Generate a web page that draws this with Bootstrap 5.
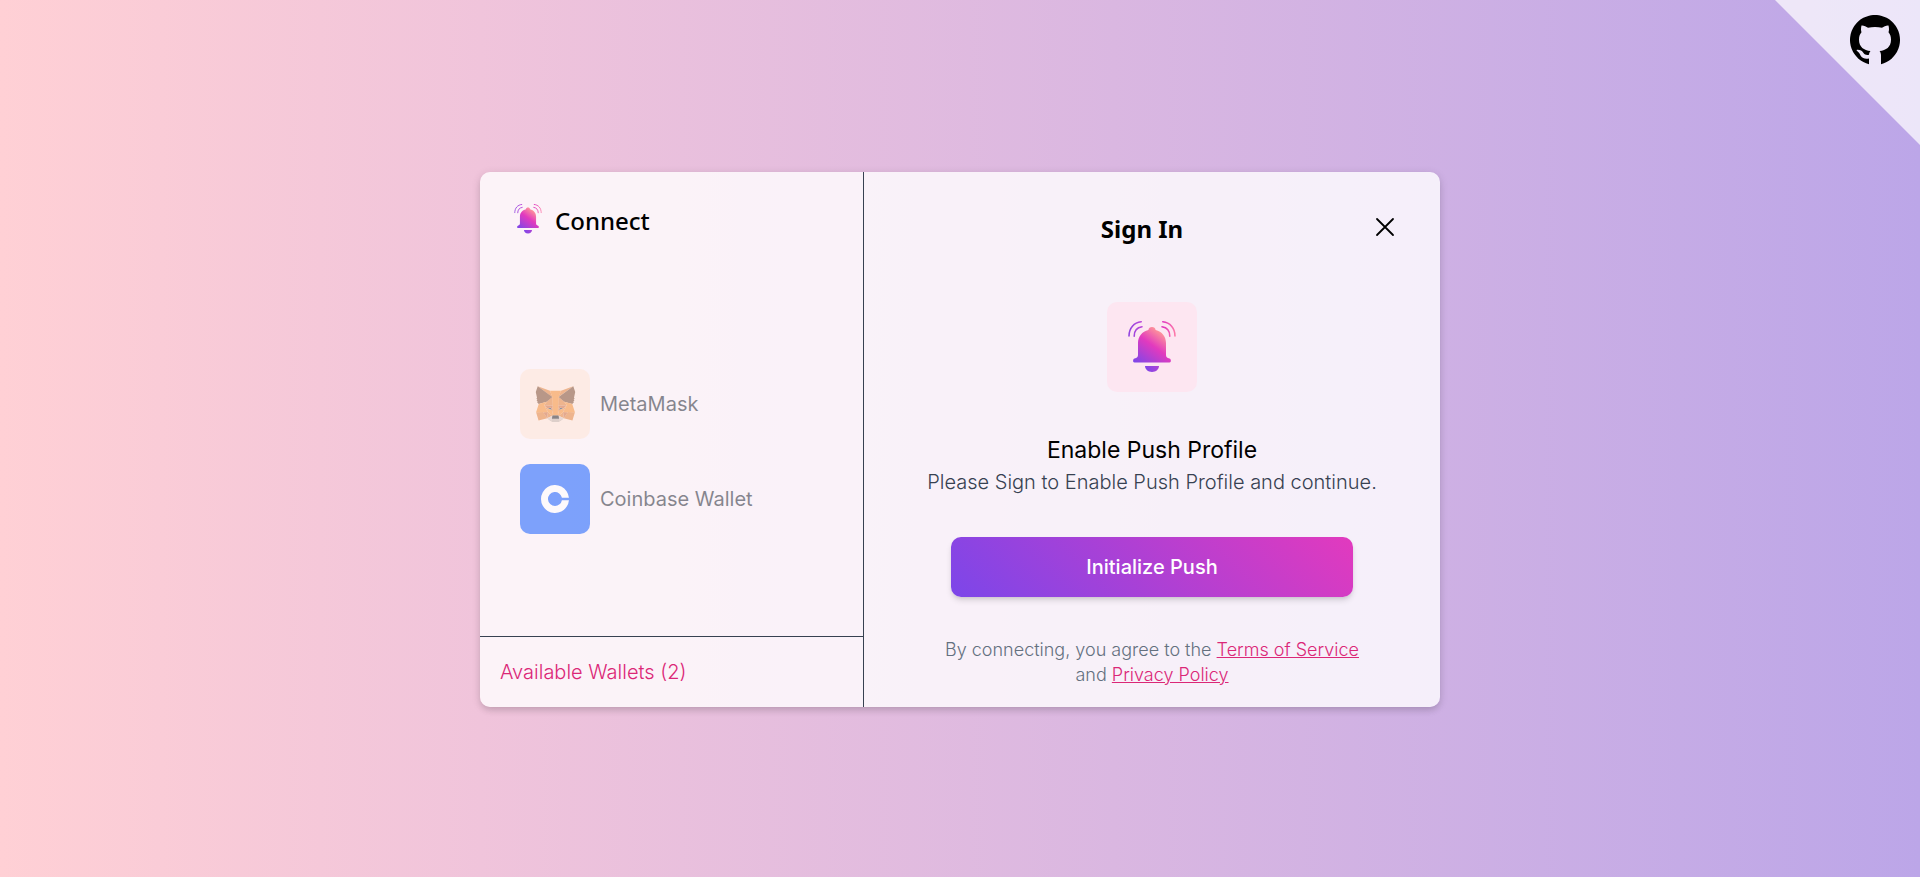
<!DOCTYPE html>
<html lang="en">
<head>
<meta charset="utf-8">
<meta name="viewport" content="width=device-width, initial-scale=1">
<title>Connect wallet</title>
<link href="https://cdn.jsdelivr.net/npm/bootstrap@5.3.0/dist/css/bootstrap.min.css" rel="stylesheet">
<style>
  body { font-family: Inter, "Liberation Sans", sans-serif; color: #000; padding-top: 2px; background: linear-gradient(90deg, #ffd0d5 0%, #f0c4db 25%, #dab7e1 58%, #bca6e8 100%); }
  .title-font { font-family: "Noto Sans", "Open Sans", sans-serif; font-size: 24px; line-height: 34px; }
  .fw-mid { font-weight: 500; }
  .fw-soft { font-weight: 350; }
  .corner { width: 145px; height: 145px; background: rgba(255,255,255,.72); clip-path: polygon(0 0, 100% 0, 100% 100%); padding: 15px 20px; }
  .dialog { width: 50%; min-width: 800px; border-radius: 10px; background: rgba(255,255,255,.8); box-shadow: 0 4px 6px -1px rgba(0,0,0,.1), 0 2px 10px rgba(0,0,0,.12); }
  .side { width: 40%; border-right: 1px solid #374151; }
  .side-head { padding: 32px 34px 28px; gap: 13px; }
  .side-foot { height: 71px; border-top: 1px solid #374151; padding: 0 20px; }
  .pink { color: #db2777; }
  .text-lg { font-size: 20px; line-height: 28px; }
  .text-xl2 { font-size: 23px; line-height: 36px; }
  .wallets { gap: 25px; padding: 0 40px; }
  .wallet { border: 0; background: none; padding: 0; gap: 10px; opacity: .5; color: #111827; text-align: left; }
  .tile { width: 70px; height: 70px; border-radius: 10px; }
  .tile-fox { background: #ffe5d3; }
  .tile-coin { background: #0052ff; }
  .tile-bell { width: 90px; height: 90px; border-radius: 10px; background: #fde6f1; margin-top: 56px; }
  .push { width: 402px; height: 60px; border: 0; border-radius: 10px; color: #fff; background: linear-gradient(45deg, #7c46e9, #e23abe); box-shadow: 0 4px 6px -1px rgba(0,0,0,.15), 0 2px 4px -2px rgba(0,0,0,.1); }
  .gap-above { margin-top: 40px; }
  .terms { font-size: 18px; line-height: 25px; width: 420px; color: #64707f; }
  .slate { color: #374151; }
  .plain { border: 0; background: none; padding: 0; }
  .main-pane { padding: 40px 45px 20px; }
  .intro { padding-bottom: 1px; }
</style>
</head>
<body class="min-vh-100 d-flex align-items-center justify-content-center">

<svg width="0" height="0" class="position-absolute" aria-hidden="true">
  <defs>
    <linearGradient id="bellFill" gradientUnits="userSpaceOnUse" x1="10" y1="44" x2="34" y2="11">
      <stop offset="0" stop-color="#7c46e9"/><stop offset=".6" stop-color="#e23abe"/><stop offset="1" stop-color="#ff9898"/>
    </linearGradient>
    <linearGradient id="waveFill" gradientUnits="userSpaceOnUse" x1="0" y1="0" x2="48" y2="0">
      <stop offset="0" stop-color="#8f46e0"/><stop offset=".35" stop-color="#c446d8"/><stop offset=".75" stop-color="#e23abe"/><stop offset="1" stop-color="#ff80a8"/>
    </linearGradient>
    <linearGradient id="clapFill" gradientUnits="userSpaceOnUse" x1="17" y1="50" x2="31" y2="44">
      <stop offset="0" stop-color="#7c46e9"/><stop offset="1" stop-color="#b043d5"/>
    </linearGradient>
    <symbol id="bell" viewBox="0 0 48 52">
      <path fill="url(#bellFill)" d="M24 6c2 0 3.400 1.200 3.600 3C34 10.500 38 15.500 38 22v12c0 2 1 3 3.500 3.500 1.700.4 2 4 0 4h-35c-2 0-1.700-3.600 0-4C9 37 10 36 10 34V22c0-6.500 4-11.500 10.400-13C20.600 7.200 22 6 24 6z"/>
      <path fill="url(#clapFill)" d="M17 45h14c0 3-3 6-7 6s-7-3-7-6z"/>
      <path fill="none" stroke="url(#waveFill)" stroke-width="1.600" stroke-linecap="round" d="M1 15C1 7 6 1.500 13.200.8M6.200 15.200C6.200 10 9 6.500 14 5.800M47 15C47 7 42 1.500 34.800.8M41.800 15.200C41.800 10 39 6.500 34 5.800"/>
    </symbol>
  </defs>
</svg>

<div class="corner position-absolute top-0 end-0 d-flex justify-content-end align-items-start">
  <a href="#" class="text-black d-flex" aria-label="GitHub">
    <svg width="50" height="50" viewBox="0 0 50 50" fill="currentColor"><path d="M19 49.200A25 25 0 1 1 31 49.200V41C31 38.500 30.500 37 29.500 36 36 35.500 41 32 41 24.500 41 21.500 40 19 38.500 17.300 39.300 15 39 12.500 38.500 10.500 36 10.300 34 11.500 32 12.800 27.500 11.800 22.500 11.800 18 12.800 16 11.500 14 10.300 11.500 10.500 11 12.500 10.700 15 11.500 17.300 10 19 9 21.500 9 24.500 9 32 14 35.500 20.500 36 19.700 37 19.200 38 19 39.700 17 40.300 15 40 13.500 38 12 35.500 10 34.500 7 34.700 6 35.200 7 36 8 36.700 9.500 38 10 39.500 11 41.200 12.500 43.500 15.500 44 19 43.400z"/></svg>
  </a>
</div>

<main class="dialog d-flex overflow-hidden">
  <section class="side d-flex flex-column">
    <header class="side-head d-flex align-items-start">
      <svg width="28" height="30" viewBox="0 0 48 52"><use href="#bell"/></svg>
      <h1 class="title-font fw-mid m-0">Connect</h1>
    </header>
    <div class="wallets flex-grow-1 d-flex flex-column justify-content-center">
      <button type="button" class="wallet d-flex align-items-center text-lg">
        <span class="tile tile-fox d-flex align-items-center justify-content-center">
          <svg width="41" height="38" viewBox="0 0 35 33">
            <path fill="#E17726" d="M32.960 1 19.820 10.720 22.270 5z"/>
            <path fill="#E27625" d="M2.050 1 15.070 10.810 12.740 5zM28.230 23.530 24.730 28.870 32.220 30.930 34.360 23.650zM.65 23.650 2.780 30.930 10.270 28.870 6.770 23.530zM9.860 14.510 7.780 17.650 15.200 17.990 14.950 10zM25.140 14.510 19.980 9.900 19.800 17.990 27.220 17.650zM10.270 28.870 14.750 26.700 10.890 23.700zM20.250 26.700 24.740 28.870 24.110 23.700z"/>
            <path fill="#D5BFB2" d="M24.740 28.870 20.250 26.700 20.620 29.610 20.580 30.840zM10.270 28.870 14.420 30.840 14.390 29.610 14.750 26.700z"/>
            <path fill="#233447" d="M14.500 21.750 10.780 20.660 13.400 19.460zM20.500 21.750 21.600 19.460 24.230 20.660z"/>
            <path fill="#CC6228" d="M10.270 28.870 10.920 23.530 6.770 23.650zM24.080 23.530 24.730 28.870 28.230 23.650zM27.220 17.650 19.800 17.990 20.490 21.750 21.590 19.460 24.220 20.660zM10.780 20.660 13.400 19.460 14.500 21.750 15.200 17.990 7.780 17.650z"/>
            <path fill="#E27525" d="M7.780 17.650 10.890 23.700 10.780 20.660zM24.230 20.660 24.110 23.700 27.220 17.650zM15.200 17.990 14.500 21.750 15.370 26.190 15.570 20.340zM19.800 17.990 19.450 20.330 19.630 26.190 20.500 21.750z"/>
            <path fill="#F5841F" d="M20.500 21.750 19.630 26.190 20.250 26.700 24.110 23.700 24.230 20.660zM10.780 20.660 10.890 23.700 14.750 26.700 15.370 26.190 14.500 21.750z"/>
            <path fill="#C0AC9D" d="M20.580 30.840 20.620 29.610 20.270 29.330H14.730L14.390 29.610 14.420 30.840 10.270 28.870 11.720 30.070 14.680 32.110H20.320L23.290 30.070 24.740 28.870z"/>
            <path fill="#161616" d="M20.250 26.700 19.630 26.190H15.370L14.750 26.700 14.390 29.610 14.730 29.330H20.270L20.620 29.610z"/>
            <path fill="#763E1A" d="M33.520 11.350 34.620 6 32.960 1 20.250 10.390 25.140 14.510 32.050 16.530 33.580 14.750 32.910 14.270 33.970 13.310 33.160 12.680 34.210 11.880zM.38 6 1.490 11.350.78 11.880 1.840 12.680 1.030 13.310 2.090 14.270 1.420 14.750 2.950 16.530 9.860 14.510 14.750 10.390 2.050 1z"/>
            <path fill="#F5841F" d="M32.050 16.530 25.140 14.510 27.220 17.650 24.110 23.700 28.230 23.650H34.360zM9.860 14.510 2.950 16.530.65 23.650H6.770L10.890 23.700 7.780 17.650zM19.800 17.990 20.250 10.390 22.270 5H12.740L14.750 10.390 15.200 17.990 15.370 20.350V26.190H19.630V20.350z"/>
          </svg>
        </span>
        <span>MetaMask</span>
      </button>
      <button type="button" class="wallet d-flex align-items-center text-lg">
        <span class="tile tile-coin d-flex align-items-center justify-content-center">
          <svg width="28" height="28" viewBox="0 0 28 28"><path fill="#fff" d="M14 21a7 7 0 1 1 6.900-8.200h7.050a14 14 0 1 0 0 2.400H20.900A7 7 0 0 1 14 21z"/></svg>
        </span>
        <span>Coinbase Wallet</span>
      </button>
    </div>
    <footer class="side-foot d-flex align-items-center">
      <span class="pink text-lg fw-soft">Available Wallets (2)</span>
    </footer>
  </section>

  <section class="main-pane flex-grow-1 d-flex flex-column align-items-center text-center">
    <header class="w-100 d-flex align-items-start">
      <h2 class="title-font fw-bold m-0 flex-grow-1">Sign In</h2>
      <button type="button" class="plain d-flex" aria-label="Close">
        <svg width="20" height="30" viewBox="0 0 20 30" fill="none" stroke="#000" stroke-width="1.800" stroke-linecap="round"><path d="M2 7 18 23M18 7 2 23"/></svg>
      </button>
    </header>
    <div class="tile-bell d-flex align-items-center justify-content-center">
      <svg width="48" height="52" viewBox="0 0 48 52"><use href="#bell"/></svg>
    </div>
    <h3 class="text-xl2 fw-normal mb-0 gap-above">Enable Push Profile</h3>
    <p class="intro text-lg fw-soft slate mb-0">Please Sign to Enable Push Profile and continue.</p>
    <button type="button" class="push text-lg fw-mid gap-above">Initialize Push</button>
    <p class="terms fw-soft mb-0 gap-above">By connecting, you agree to the <a href="#" class="pink">Terms of Service</a> and <a href="#" class="pink">Privacy Policy</a></p>
  </section>
</main>

<script src="https://cdn.jsdelivr.net/npm/bootstrap@5.3.0/dist/js/bootstrap.bundle.min.js"></script>
</body>
</html>
